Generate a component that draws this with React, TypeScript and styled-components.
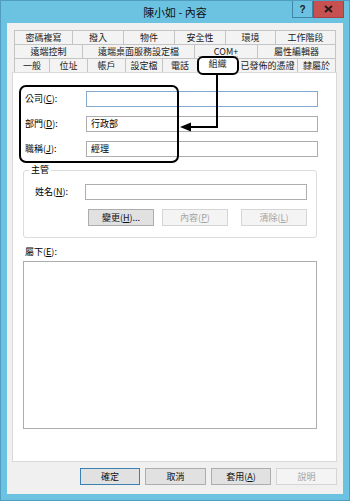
import React from "react";
import styled, { createGlobalStyle } from "styled-components";

const GlobalStyle = createGlobalStyle`
  html, body {
    margin: 0;
    padding: 0;
    background: #ffffff;
  }
  body {
    font-family: "Noto Sans CJK TC", "Noto Sans", sans-serif;
    color: #000;
  }
`;

const Window = styled.div`
  position: relative;
  width: 350px;
  height: 501px;
  box-sizing: border-box;
  background: #6cc3e1;
  border: 1px solid #4f9dbf;
  padding: 0 6px 6px 6px;
  display: flex;
  flex-direction: column;
`;

const TitleBar = styled.div`
  height: 22px;
  display: grid;
  grid-template-columns: 1fr auto 1fr;
  align-items: start;
`;

const Title = styled.div`
  grid-column: 2;
  font-size: 11px;
  line-height: 22px;
  color: #111;
`;

const CaptionButtons = styled.div`
  grid-column: 3;
  justify-self: end;
  display: flex;
  margin-right: -1px;
`;

const CaptionButton = styled.div<{ $close?: boolean }>`
  width: ${(p) => (p.$close ? 31 : 21)}px;
  height: 17px;
  box-sizing: border-box;
  display: flex;
  align-items: center;
  justify-content: center;
  background: ${(p) => (p.$close ? "#c75050" : "#6cc3e1")};
  border: 1px solid ${(p) => (p.$close ? "#a84141" : "#3d86a5")};
  border-top: none;
  font-size: 10px;
  font-weight: bold;
  font-family: "Liberation Sans", sans-serif;
  color: #1b1b1b;
`;

const Client = styled.div`
  flex: 1;
  background: #f0f0f0;
  padding: 7px 6px 0 5px;
  display: flex;
  flex-direction: column;
`;

const TabRows = styled.div`
  margin: 0 1px 0 2px;
  display: flex;
  flex-direction: column;
`;

const TabRow = styled.div`
  display: flex;
  height: 14px;
  align-items: flex-end;
`;

const Tab = styled.div<{ $w: number; $active?: boolean }>`
  position: relative;
  flex: none;
  box-sizing: border-box;
  width: ${(p) => p.$w}px;
  height: ${(p) => (p.$active ? 17 : 14)}px;
  margin-bottom: ${(p) => (p.$active ? -1 : 0)}px;
  z-index: ${(p) => (p.$active ? 2 : 0)};
  background: ${(p) => (p.$active ? "#ffffff" : "#f3f3f3")};
  border-top: 1px solid #c4c4c4;
  border-right: 1px solid #c4c4c4;
  font-size: 9px;
  line-height: 13px;
  text-align: center;
  color: #1a1a1a;
  white-space: nowrap;
  &:first-child {
    border-left: 1px solid #c4c4c4;
  }
`;

const Panel = styled.div`
  position: relative;
  z-index: 1;
  height: 390px;
  box-sizing: border-box;
  background: #ffffff;
  border: 1px solid #d9d9d9;
  padding: 18px 0 0 12px;
  display: flex;
  flex-direction: column;
`;

const FieldRow = styled.div<{ $label: number }>`
  display: grid;
  grid-template-columns: ${(p) => p.$label}px auto;
  align-items: center;
  height: 16px;
  & + & {
    margin-top: 9px;
  }
`;

const Label = styled.label`
  font-size: 9px;
  line-height: 10px;
  white-space: nowrap;
`;

const TextBox = styled.div<{ $w: number; $focus?: boolean }>`
  width: ${(p) => p.$w}px;
  height: 16px;
  box-sizing: border-box;
  background: #ffffff;
  border: 1px solid ${(p) => (p.$focus ? "#86a9d0" : "#adadad")};
  font-size: 9px;
  line-height: 14px;
  padding-left: 4px;
`;

const Group = styled.fieldset`
  margin: 8px 0 0 -2px;
  width: 294px;
  box-sizing: border-box;
  border: 1px solid #dcdcdc;
  border-radius: 3px;
  padding: 9px 0 11px 11px;
`;

const Legend = styled.legend`
  font-size: 9px;
  line-height: 10px;
  padding: 0 2px;
  margin-left: -6px;
`;

const ButtonRow = styled.div`
  display: flex;
  margin: 9px 0 0 53px;
`;

const Button = styled.div<{ $w: number; $gap?: number; $disabled?: boolean; $default?: boolean }>`
  width: ${(p) => p.$w}px;
  height: 17px;
  box-sizing: border-box;
  margin-left: ${(p) => p.$gap ?? 0}px;
  display: flex;
  align-items: center;
  justify-content: center;
  font-size: 9px;
  background: ${(p) => (p.$disabled ? "#f4f4f4" : "#e1e1e1")};
  border: 1px solid
    ${(p) => (p.$default ? "#3c7fb1" : p.$disabled ? "#d5d5d5" : "#adadad")};
  color: ${(p) => (p.$disabled ? "#a3a3a3" : "#111")};
  white-space: nowrap;
`;

const ListLabel = styled(Label)`
  display: block;
  margin-top: 9px;
`;

const ListBox = styled.div`
  margin: 4px 0 0 -2px;
  width: 294px;
  height: 168px;
  box-sizing: border-box;
  background: #ffffff;
  border: 1px solid #adadad;
`;

const Footer = styled.div`
  margin-top: 6px;
  display: flex;
  justify-content: flex-end;
  gap: 5px;
`;

const Overlay = styled.svg`
  position: absolute;
  top: -1px;
  left: -1px;
  pointer-events: none;
  z-index: 5;
`;

const rows: { label: string; w: number; active?: boolean }[][] = [
  [
    { label: "密碼複寫", w: 59 },
    { label: "撥入", w: 51 },
    { label: "物件", w: 51 },
    { label: "安全性", w: 51 },
    { label: "環境", w: 50 },
    { label: "工作階段", w: 60 },
  ],
  [
    { label: "遠端控制", w: 69 },
    { label: "遠端桌面服務設定檔", w: 112 },
    { label: "COM+", w: 63 },
    { label: "屬性編輯器", w: 78 },
  ],
  [
    { label: "一般", w: 36 },
    { label: "位址", w: 38 },
    { label: "帳戶", w: 38 },
    { label: "設定檔", w: 37 },
    { label: "電話", w: 35 },
    { label: "組織", w: 40, active: true },
    { label: "已發佈的憑證", w: 60 },
    { label: "隸屬於", w: 38 },
  ],
];

export default function App() {
  return (
    <>
      <GlobalStyle />
      <Window>
        <TitleBar>
          <Title>陳小如 - 內容</Title>
          <CaptionButtons>
            <CaptionButton>?</CaptionButton>
            <CaptionButton $close>
              <svg width="9" height="8" viewBox="0 0 9 8">
                <path d="M1 1 L8 7 M8 1 L1 7" stroke="#1b1b1b" strokeWidth="1.8" />
              </svg>
            </CaptionButton>
          </CaptionButtons>
        </TitleBar>

        <Client>
          <TabRows>
            {rows.map((row, i) => (
              <TabRow key={i}>
                {row.map((t) => (
                  <Tab key={t.label} $w={t.w} $active={t.active}>
                    {t.label}
                  </Tab>
                ))}
              </TabRow>
            ))}
          </TabRows>

          <Panel>
            <FieldRow $label={61}>
              <Label>
                公司(<u>C</u>):
              </Label>
              <TextBox $w={232} $focus />
            </FieldRow>
            <FieldRow $label={61}>
              <Label>
                部門(<u>D</u>):
              </Label>
              <TextBox $w={232}>行政部</TextBox>
            </FieldRow>
            <FieldRow $label={61}>
              <Label>
                職稱(<u>J</u>):
              </Label>
              <TextBox $w={232}>經理</TextBox>
            </FieldRow>

            <Group>
              <Legend>主管</Legend>
              <FieldRow $label={50}>
                <Label>
                  姓名(<u>N</u>):
                </Label>
                <TextBox $w={222} />
              </FieldRow>
              <ButtonRow>
                <Button $w={66}>
                  變更(<u>H</u>)...
                </Button>
                <Button $w={66} $gap={8} $disabled>
                  內容(<u>P</u>)
                </Button>
                <Button $w={66} $gap={13} $disabled>
                  清除(<u>L</u>)
                </Button>
              </ButtonRow>
            </Group>

            <ListLabel>
              屬下(<u>E</u>):
            </ListLabel>
            <ListBox />
          </Panel>

          <Footer>
            <Button $w={60} $default>
              確定
            </Button>
            <Button $w={61}>取消</Button>
            <Button $w={60}>
              套用(<u>A</u>)
            </Button>
            <Button $w={61} $disabled>
              說明
            </Button>
          </Footer>
        </Client>

        <Overlay width="350" height="501" viewBox="0 0 350 501">
          <g fill="none" stroke="#000" strokeWidth="2">
            <rect x="198" y="57" width="40" height="17" rx="5" />
            <path d="M217 74 V127 H189" />
            <rect x="20" y="86" width="158" height="76" rx="6" />
          </g>
          <polygon points="180,127 191,122.5 191,131.5" fill="#000" />
        </Overlay>
      </Window>
    </>
  );
}
